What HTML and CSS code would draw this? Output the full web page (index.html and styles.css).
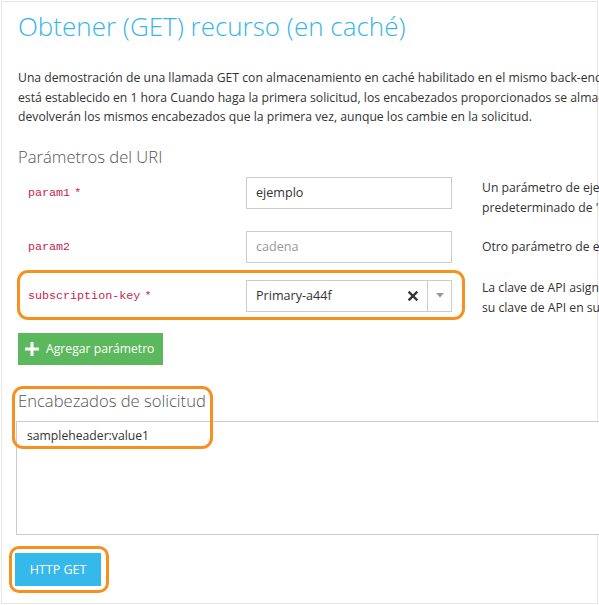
FILE: index.html
```html
<!DOCTYPE html>
<html lang="es">
<head>
<meta charset="utf-8">
<title>Obtener (GET) recurso (en caché)</title>
<link rel="stylesheet" href="styles.css">
</head>
<body>
<div class="page">
  <h1 class="title">Obtener (GET) recurso (en caché)</h1>
  <p class="intro">Una demostración de una llamada GET con almacenamiento en caché habilitado en el mismo back-end. El tiempo de vida de la caché<br>está establecido en 1 hora Cuando haga la primera solicitud, los encabezados proporcionados se almacenarán en caché. Las llamadas siguientes<br>devolverán los mismos encabezados que la primera vez, aunque los cambie en la solicitud.</p>

  <h2 class="section-title">Parámetros del URI</h2>
  <div class="params">
    <div class="param-row">
      <div class="param-name"><code>param1</code>&nbsp;<code>*</code></div>
      <div class="param-field"><input class="text-input" type="text" value="ejemplo"></div>
      <div class="param-help">Un parámetro de ejemplo obligatorio con el valor<br>predeterminado de 'ejemplo'.</div>
    </div>
    <div class="param-row">
      <div class="param-name"><code>param2</code></div>
      <div class="param-field"><input class="text-input" type="text" placeholder="cadena"></div>
      <div class="param-help single">Otro parámetro de ejemplo, establecido como no obligatorio.</div>
    </div>
    <div class="param-row key-row">
      <span class="mark mark-key"></span>
      <div class="param-name"><code>subscription-key</code>&nbsp;<code>*</code></div>
      <div class="param-field">
        <div class="select">
          <span class="select-value">Primary-a44f</span>
          <span class="select-clear"><svg width="10" height="10" viewBox="0 0 10 10"><path d="M1.5 1.5 L8.5 8.5 M8.5 1.5 L1.5 8.5" stroke="#333" stroke-width="2.4" stroke-linecap="square"/></svg></span>
          <span class="select-arrow"><svg width="8" height="5" viewBox="0 0 8 5"><path d="M0 0 H8 L4 4.5 Z" fill="#999"/></svg></span>
        </div>
      </div>
      <div class="param-help key">La clave de API asignada a la suscripción. Puede encontrar<br>su clave de API en su página de perfil.</div>
    </div>
  </div>

  <button class="btn btn-add" type="button"><svg class="plus" width="14" height="14" viewBox="0 0 14 14"><path d="M7 0 V14 M0 7 H14" stroke="#fff" stroke-width="3"/></svg><span>Agregar parámetro</span></button>

  <div class="headers">
    <span class="mark mark-headers"></span>
    <h2 class="section-title headers-title">Encabezados de solicitud</h2>
    <textarea class="headers-input">sampleheader:value1</textarea>
  </div>

  <div class="actions">
    <span class="send-wrap"><button class="btn btn-send" type="button">HTTP GET</button></span>
  </div>
</div>
</body>
</html>
```

FILE: styles.css
```css
html, body {
  margin: 0;
  padding: 0;
  background: #fff;
}

body {
  overflow: hidden;
  font-family: "Open Sans", "Liberation Sans", sans-serif;
  color: #333;
}

.page {
  box-sizing: border-box;
  width: 597px;
  height: 603px;
  margin: 1px 0 0 1px;
  border: 1px solid #e6e6e6;
  padding: 1px 0 0 16px;
}

.title {
  margin: 8px 0 0;
  font-size: 26px;
  font-weight: 300;
  line-height: 31px;
  color: #35b6e9;
  white-space: nowrap;
}

.intro {
  margin: 26px 0 0;
  font-size: 12.2px;
  line-height: 19.5px;
  color: #333;
  white-space: nowrap;
}

.section-title {
  margin: 18px 0 0;
  font-size: 16.6px;
  font-weight: 300;
  line-height: 24px;
  color: #555;
  white-space: nowrap;
}

.params {
  display: flex;
  flex-direction: column;
  gap: 13px;
  margin-top: 8px;
}

.param-row {
  position: relative;
  display: grid;
  grid-template-columns: 228px 206px auto;
  align-items: start;
}

.key-row {
  margin-top: 4px;
}

.param-name {
  display: flex;
  align-items: center;
  height: 32px;
  padding-left: 10px;
  white-space: nowrap;
}

.param-name code {
  font-family: "Liberation Mono", "DejaVu Sans Mono", monospace;
  font-size: 11.7px;
  color: #c7254e;
}

.text-input {
  box-sizing: border-box;
  display: block;
  width: 206px;
  height: 32px;
  margin: 0;
  padding: 0 9px;
  border: 1px solid #ccc;
  border-radius: 0;
  font-family: "Open Sans", "Liberation Sans", sans-serif;
  font-size: 12.6px;
  color: #333;
  background: #fff;
  outline: none;
}

.text-input::placeholder {
  color: #999;
}

.select {
  box-sizing: border-box;
  display: flex;
  align-items: stretch;
  width: 206px;
  height: 32px;
  border: 1px solid #ccc;
  background: #fff;
  font-size: 12.6px;
}

.select-value {
  flex: 1;
  display: flex;
  align-items: center;
  padding-left: 9px;
  color: #333;
}

.select-clear {
  display: flex;
  align-items: center;
  justify-content: center;
  width: 24px;
  padding-right: 2px;
}

.select-arrow {
  display: flex;
  align-items: center;
  justify-content: center;
  width: 23px;
  border-left: 1px solid #ccc;
}

.param-help {
  margin: 1px 0 0 30px;
  font-size: 12.2px;
  line-height: 20px;
  color: #333;
  white-space: nowrap;
}

.param-help.single {
  margin-top: 6px;
}

.param-help.key {
  margin-top: -2px;
}

.mark {
  position: absolute;
  box-sizing: border-box;
  border: 3px solid #f7901e;
  border-radius: 11px;
  pointer-events: none;
}

.mark-key {
  left: -1px;
  top: -10px;
  width: 448px;
  height: 50px;
}

.btn {
  display: inline-flex;
  align-items: center;
  box-sizing: border-box;
  height: 32px;
  margin: 0;
  border: 0;
  border-radius: 0;
  font-family: "Open Sans", "Liberation Sans", sans-serif;
  font-size: 12.2px;
  color: #fff;
  white-space: nowrap;
  cursor: pointer;
}

.btn-add {
  margin-top: 15px;
  padding: 0 8px 0 7px;
  width: 145px;
  background: #5cb85c;
  gap: 7px;
}

.headers {
  position: relative;
}

.headers-title {
  margin-top: 24px;
}

.mark-headers {
  left: -6px;
  top: -3px;
  width: 201px;
  height: 63px;
  z-index: 1;
}

.headers-input {
  box-sizing: border-box;
  display: block;
  width: 700px;
  height: 114px;
  margin: 8px 0 0 -2px;
  padding: 4px 10px;
  border: 1px solid #ccc;
  border-radius: 0;
  font-family: "Open Sans", "Liberation Sans", sans-serif;
  font-size: 12.2px;
  line-height: 20px;
  color: #333;
  resize: none;
  outline: none;
  background: #fff;
}

.actions {
  margin-top: 18px;
  margin-left: -3px;
}

.send-wrap {
  position: relative;
  display: inline-block;
}

.send-wrap::after {
  content: "";
  position: absolute;
  left: -6px;
  top: -7px;
  width: 100px;
  height: 47px;
  box-sizing: border-box;
  border: 3px solid #f7901e;
  border-radius: 10px;
}

.btn-send {
  display: flex;
  justify-content: center;
  width: 86px;
  height: 33px;
  background: #35b9eb;
  font-size: 12.5px;
}
```
